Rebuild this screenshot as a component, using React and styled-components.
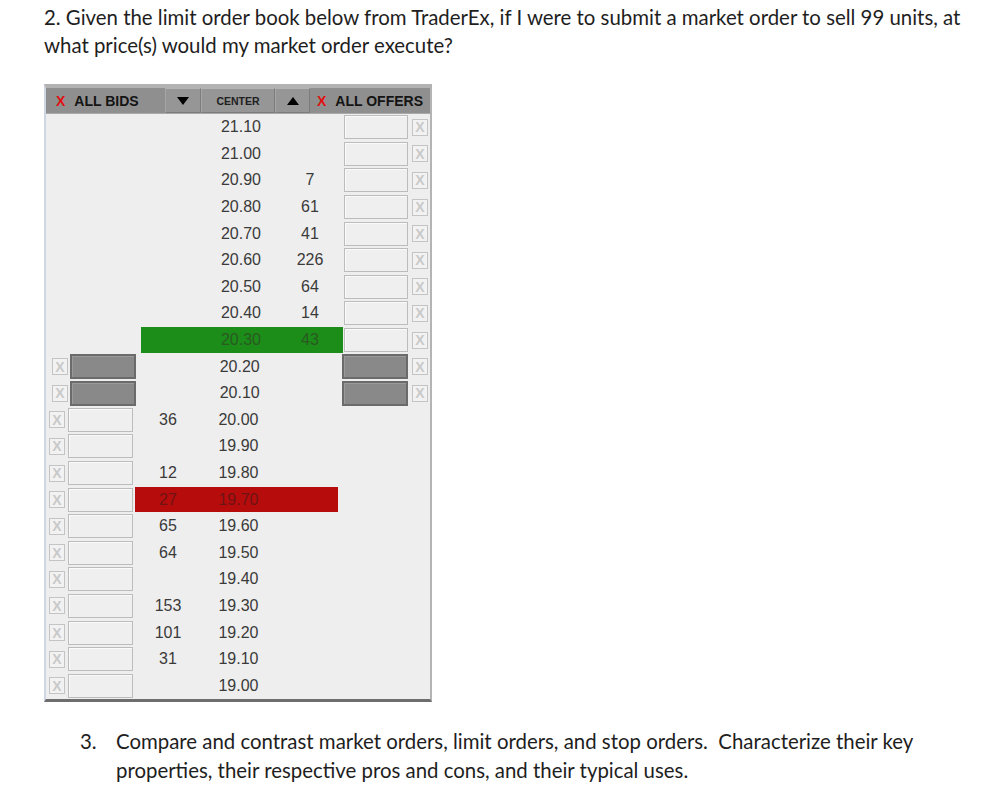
import React from "react";
import styled, { createGlobalStyle, css } from "styled-components";

const Global = createGlobalStyle`
  html, body { margin: 0; padding: 0; background: #ffffff; }
  body { font-family: Lato, "Noto Sans", sans-serif; color: #1e1e1e; }
`;

const Page = styled.div`
  width: 1008px;
  height: 793px;
  overflow: hidden;
  padding: 3px 0 0 44px;
  box-sizing: border-box;
`;

const Question = styled.p`
  margin: 0;
  font-size: 20.4px;
  line-height: 28px;
  color: #1e1e1e;
  white-space: nowrap;
`;

const Panel = styled.div`
  margin-top: 25px;
  width: 388px;
  box-sizing: border-box;
  background: #eeeeee;
  border-top: 4px solid #b3b3b3;
  border-left: 2px solid #cfd6e1;
  border-right: 2px solid #b4b4b4;
  border-bottom: 3px solid #6e6e6e;
  font-family: "Liberation Sans", Arial, sans-serif;
`;

const Header = styled.div`
  display: grid;
  grid-template-columns: 119px 36px 74px 35px 1fr;
  height: 25px;
  background: #8f8f8f;
  border-bottom: 1px solid #a9a9a9;
`;

const AllLabel = styled.div`
  display: flex;
  align-items: center;
  gap: 9px;
  padding-left: ${(p) => p.$pad}px;
  font-size: 14px;
  font-weight: bold;
  color: #141414;
  white-space: nowrap;
`;

const RedX = styled.span`
  color: #e01010;
  font-size: 14px;
  font-weight: bold;
`;

const HeadButton = styled.div`
  display: flex;
  align-items: center;
  justify-content: center;
  background: #969696;
  border-top: 1px solid #b4b4b4;
  border-left: 1px solid #a6a6a6;
  border-right: 1px solid #7c7c7c;
  border-bottom: 1px solid #7c7c7c;
  font-size: 10.5px;
  font-weight: bold;
  color: #202020;
`;

const Row = styled.div`
  display: grid;
  grid-template-columns: 22px 68px 64px 80px 60px 70px 1fr;
  height: 26.6px;
  align-items: center;
  font-size: 16px;
  color: #3a3a3a;
`;

const Highlight = styled.div`
  grid-column: 3 / 6;
  grid-row: 1;
  align-self: stretch;
  margin: 0.5px 0;
  ${(p) =>
    p.$tone === "green"
      ? css`
          background: #1b8d18;
          margin-left: 5px;
          margin-right: -3px;
        `
      : css`
          background: #b60c0c;
          margin-left: -1px;
          margin-right: 2px;
        `}
`;

const Cell = styled.div`
  grid-row: 1;
  grid-column: ${(p) => p.$col};
  text-align: center;
  position: relative;
  color: ${(p) =>
    p.$tone === "green" ? "#2a5a22" : p.$tone === "red" ? "#6e1414" : "#3a3a3a"};
  padding-left: ${(p) => (p.$shift > 0 ? p.$shift * 2 : 0)}px;
  padding-right: ${(p) => (p.$shift < 0 ? -p.$shift * 2 : 0)}px;
`;

const XBox = styled.div`
  grid-row: 1;
  grid-column: ${(p) => p.$col};
  justify-self: start;
  margin-left: ${(p) => p.$ml}px;
  width: 16px;
  height: 17px;
  box-sizing: border-box;
  border: 1px solid #c4c4c4;
  background: #f2f2f2;
  display: flex;
  align-items: center;
  justify-content: center;
  font-family: "Liberation Sans", Arial, sans-serif;
  font-weight: bold;
  font-size: 14px;
  line-height: 1;
  color: #c9c9c9;
`;

const Entry = styled.div`
  grid-row: 1;
  grid-column: ${(p) => p.$col};
  justify-self: start;
  margin-left: ${(p) => p.$ml}px;
  box-sizing: border-box;
  ${(p) =>
    p.$filled
      ? css`
          width: 66px;
          height: 25px;
          background: #898989;
          border: 2px solid #6b6b6b;
          box-shadow: inset 1px 1px 0 #9a9a9a;
        `
      : css`
          width: ${p.$w}px;
          height: 24px;
          background: #efefef;
          border: 1px solid #bcbcbc;
          box-shadow: inset 1px 1px 0 #fafafa;
        `}
`;

const Item = styled.div`
  display: flex;
  margin: 25px 0 0 36px;
  font-size: 20.4px;
  line-height: 29px;
  color: #1e1e1e;
  white-space: nowrap;
`;

const ItemNum = styled.span`
  width: 36px;
  flex: none;
`;

const rows = [
  { p: "21.10" },
  { p: "21.00" },
  { p: "20.90", a: 7 },
  { p: "20.80", a: 61 },
  { p: "20.70", a: 41 },
  { p: "20.60", a: 226 },
  { p: "20.50", a: 64 },
  { p: "20.40", a: 14 },
  { p: "20.30", a: 43, hl: "green" },
  { p: "20.20" },
  { p: "20.10" },
  { p: "20.00", b: 36 },
  { p: "19.90" },
  { p: "19.80", b: 12 },
  { p: "19.70", b: 27, hl: "red" },
  { p: "19.60", b: 65 },
  { p: "19.50", b: 64 },
  { p: "19.40" },
  { p: "19.30", b: 153 },
  { p: "19.20", b: 101 },
  { p: "19.10", b: 31 },
  { p: "19.00" },
];

function Tri({ up }) {
  return (
    <svg width="12" height="8" viewBox="0 0 12 8">
      <polygon points={up ? "0,8 12,8 6,0" : "0,0 12,0 6,8"} fill="#000" />
    </svg>
  );
}

function BookRow({ r, i }) {
  const askSide = i <= 10;
  const bidSide = i >= 9;
  const gray = i === 9 || i === 10;
  const shift = i <= 8 ? 1 : gray ? -0.25 : -1.5;
  return (
    <Row>
      {r.hl && <Highlight $tone={r.hl} />}
      {bidSide && <XBox $col={1} $ml={gray ? 6 : 3}>X</XBox>}
      {bidSide && <Entry $col={2} $ml={gray ? 2 : 0} $w={65} $filled={gray} />}
      {r.b != null && (
        <Cell $col={3} $tone={r.hl}>
          {r.b}
        </Cell>
      )}
      <Cell $col={4} $tone={r.hl} $shift={shift}>
        {r.p}
      </Cell>
      {r.a != null && (
        <Cell $col={5} $tone={r.hl}>
          {r.a}
        </Cell>
      )}
      {askSide && <Entry $col={6} $ml={gray ? 2 : 4} $w={64} $filled={gray} />}
      {askSide && <XBox $col={7} $ml={2}>X</XBox>}
    </Row>
  );
}

export default function App() {
  return (
    <Page>
      <Global />
      <Question>
        2. Given the limit order book below from TraderEx, if I were to submit a market order to sell 99 units, at
        <br />
        what price(s) would my market order execute?
      </Question>
      <Panel>
        <Header>
          <AllLabel $pad={10}>
            <RedX>X</RedX>ALL BIDS
          </AllLabel>
          <HeadButton>
            <Tri />
          </HeadButton>
          <HeadButton>CENTER</HeadButton>
          <HeadButton>
            <Tri up />
          </HeadButton>
          <AllLabel $pad={7}>
            <RedX>X</RedX>ALL OFFERS
          </AllLabel>
        </Header>
        {rows.map((r, i) => (
          <BookRow key={r.p} r={r} i={i} />
        ))}
      </Panel>
      <Item>
        <ItemNum>3.</ItemNum>
        <span>
          Compare and contrast market orders, limit orders, and stop orders.&nbsp; Characterize their key
          <br />
          properties, their respective pros and cons, and their typical uses.
        </span>
      </Item>
    </Page>
  );
}
